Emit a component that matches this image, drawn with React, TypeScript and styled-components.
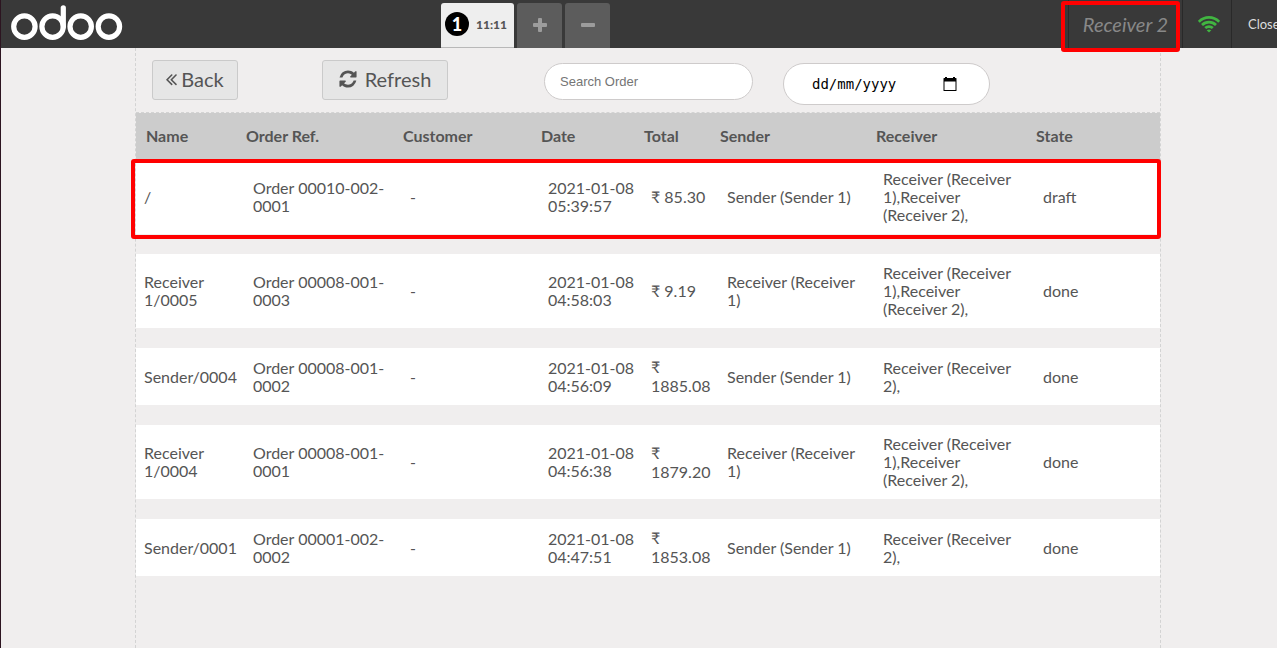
import React from "react";
import styled, { createGlobalStyle, css } from "styled-components";

const GlobalStyle = createGlobalStyle`
  *, *::before, *::after { box-sizing: border-box; }
  body {
    margin: 0;
    background: #f0eeee;
    color: #555555;
    font-family: Lato, "Liberation Sans", sans-serif;
    font-size: 16px;
    line-height: 18px;
  }
  button, input { margin: 0; font-family: inherit; color: inherit; }
`;

const Page = styled.div`
  display: flex;
  flex-direction: column;
  min-height: 100vh;
  border-left: 1px solid #2c1420;
  overflow: hidden;
`;

const TopBar = styled.header`
  display: flex;
  height: 48px;
  background: #393939;
`;

const Brand = styled.a`
  flex: none;
  width: 440px;
  padding: 4px 0 0 10px;
`;

const Tabs = styled.nav`
  display: flex;
  flex: 1;
  align-items: flex-end;
  gap: 3px;
`;

const OrderTab = styled.button`
  display: flex;
  align-items: center;
  gap: 7px;
  width: 73px;
  height: 45px;
  padding: 0 0 2px 4px;
  border: 0;
  border-bottom: 1px solid #b8b8b8;
  border-radius: 3px 3px 0 0;
  background: #eeeeee;
  font-size: 12px;
  font-weight: 900;
`;

const TabNumber = styled.span`
  width: 24px;
  border-radius: 12px;
  background: #000000;
  color: #ffffff;
  font-size: 18px;
  line-height: 24px;
  text-align: center;
`;

const SquareTab = styled.button`
  display: flex;
  align-items: center;
  justify-content: center;
  width: 45px;
  height: 45px;
  padding: 0 0 2px;
  border: 0;
  border-radius: 3px 3px 0 0;
  background: #5c5c5c;
`;

const marked = css`
  &::after {
    content: "";
    position: absolute;
    border: 4px solid #ff0000;
    border-radius: 3px;
    pointer-events: none;
  }
`;

const StatusItem = styled.div<{ $width: number }>`
  display: flex;
  flex: none;
  align-items: center;
  justify-content: center;
  width: ${(p) => p.$width}px;
  border-left: 1px solid #292929;
`;

const UserName = styled(StatusItem)`
  position: relative;
  color: #888888;
  font-size: 20px;
  font-style: italic;
  ${marked}
  &::after { inset: 1px 2px -4px -8px; }
`;

const Connection = styled(StatusItem)`
  padding-left: 4px;
`;

const CloseButton = styled.button`
  flex: none;
  width: 46px;
  padding: 0 0 0 16px;
  border: 0;
  border-left: 1px solid #292929;
  background: none;
  color: #dddddd;
  font-size: 13px;
  text-align: left;
  white-space: nowrap;
`;

const Main = styled.main`
  display: flex;
  flex: 1;
  flex-direction: column;
  margin: 0 116px 0 134px;
  border: dashed #d3d3d3;
  border-width: 0 1px;
`;

const Toolbar = styled.div`
  display: flex;
  align-items: flex-start;
  height: 65px;
  padding: 12px 16px 0;
  border-bottom: 1px dashed #d3d3d3;
`;

const ToolButton = styled.button<{ $width: number; $gap: number }>`
  display: flex;
  align-items: center;
  justify-content: center;
  gap: ${(p) => p.$gap}px;
  width: ${(p) => p.$width}px;
  height: 40px;
  padding: 0 0 2px;
  border: 1px solid #cacaca;
  border-radius: 3px;
  background: #e6e6e6;
  font-size: 20px;
`;

const Actions = styled.div`
  display: flex;
  gap: 84px;
  margin-right: 96px;
`;

const Filters = styled.div`
  display: flex;
  gap: 30px;
  padding-top: 3px;
`;

const SearchInput = styled.input`
  width: 209px;
  height: 37px;
  padding: 0 15px;
  border: 1px solid #cecbcb;
  border-radius: 20px;
  background: #ffffff;
  font-family: "Liberation Sans", Arial, sans-serif;
  font-size: 13px;
  &::placeholder { color: #757575; opacity: 1; }
`;

const DateField = styled.div`
  display: flex;
  align-items: center;
  justify-content: space-between;
  width: 207px;
  height: 42px;
  padding: 0 32px 0 28px;
  border: 1px solid #cecbcb;
  border-radius: 21px;
  background: #ffffff;
`;

const DateInput = styled.input`
  width: 100px;
  padding: 0;
  border: 0;
  background: none;
  font-family: "DejaVu Sans Mono", "Liberation Mono", monospace;
  font-size: 14px;
  &::placeholder { color: #000000; opacity: 1; }
`;

const IconButton = styled.button`
  display: flex;
  padding: 0;
  border: 0;
  background: none;
`;

const OrderTable = styled.table`
  width: 100%;
  table-layout: fixed;
  border-spacing: 0;
`;

const HeadCell = styled.th`
  height: 47px;
  padding: 0 1px 2px;
  background: #cccccc;
  text-align: left;
  &:first-child { padding-left: 10px; }
`;

const OrderRow = styled.tr<{ $marked: boolean }>`
  position: relative;
  ${(p) => p.$marked && marked}
  &::after { inset: -1px -1px 15px -5px; }
`;

const Cell = styled.td`
  padding: 10px 8px;
  border-bottom: 20px solid transparent;
  background: #ffffff;
  background-clip: padding-box;
`;

const TotalCell = styled(Cell)`
  padding: 9px 8px 10px;
  line-height: 19px;
`;

const columns = [
  { label: "Name", width: 109 },
  { label: "Order Ref.", width: 157 },
  { label: "Customer", width: 138 },
  { label: "Date", width: 103 },
  { label: "Total", width: 76 },
  { label: "Sender", width: 156 },
  { label: "Receiver", width: 160 },
  { label: "State", width: 125 },
];

const both = "Receiver (Receiver 1),Receiver (Receiver 2),";
const second = "Receiver (Receiver 2),";

const orders = [
  { name: "/", ref: "Order 00010-002-0001", date: "2021-01-08 05:39:57", total: "₹ 85.30", sender: "Sender (Sender 1)", receiver: both, state: "draft" },
  { name: "Receiver 1/0005", ref: "Order 00008-001-0003", date: "2021-01-08 04:58:03", total: "₹ 9.19", sender: "Receiver (Receiver 1)", receiver: both, state: "done" },
  { name: "Sender/0004", ref: "Order 00008-001-0002", date: "2021-01-08 04:56:09", total: "₹ 1885.08", sender: "Sender (Sender 1)", receiver: second, state: "done" },
  { name: "Receiver 1/0004", ref: "Order 00008-001-0001", date: "2021-01-08 04:56:38", total: "₹ 1879.20", sender: "Receiver (Receiver 1)", receiver: both, state: "done" },
  { name: "Sender/0001", ref: "Order 00001-002-0002", date: "2021-01-08 04:47:51", total: "₹ 1853.08", sender: "Sender (Sender 1)", receiver: second, state: "done" },
];

const Logo = () => (
  <svg width="113" height="40" viewBox="0 0 113 40" fill="none" stroke="#ffffff" strokeWidth="5.2" aria-hidden="true">
    <circle cx="13.4" cy="22.6" r="10.7" />
    <circle cx="41.6" cy="22.6" r="10.7" />
    <circle cx="69.7" cy="22.6" r="10.7" />
    <circle cx="97.9" cy="22.6" r="10.7" />
    <path d="M52.3 3.8V22.6" strokeLinecap="round" />
  </svg>
);

const WifiIcon = () => (
  <svg width="22" height="17" viewBox="0 0 22 17" fill="none" stroke="#41b541" strokeWidth="2.7" aria-hidden="true">
    <path d="M0.8 5.8Q5.2 1.4 11 1.4T21.2 5.8" />
    <path d="M4 9Q7 6.1 11 6.1T18 9" />
    <path d="M7.2 12.1Q8.9 10.6 11 10.6T14.8 12.1" />
    <path d="M11 16.6L8.7 14.3Q11 12.6 13.3 14.3Z" fill="#41b541" stroke="none" />
  </svg>
);

const AngleDoubleLeftIcon = () => (
  <svg width="11" height="20" viewBox="429 0 966 1792" fill="currentColor" aria-hidden="true">
    <path d="M1011 1376q0 13-10 23l-50 50q-10 10-23 10t-23-10l-466-466q-10-10-10-23t10-23l466-466q10-10 23-10t23 10l50 50q10 10 10 23t-10 23l-393 393 393 393q10 10 10 23zm384 0q0 13-10 23l-50 50q-10 10-23 10t-23-10l-466-466q-10-10-10-23t10-23l466-466q10-10 23-10t23 10l50 50q10 10 10 23t-10 23l-393 393 393 393q10 10 10 23z" />
  </svg>
);

const RefreshIcon = () => (
  <svg width="18" height="20" viewBox="0 0 1536 1792" fill="currentColor" aria-hidden="true">
    <path d="M1511 1056q0 5-1 7-64 268-268 434.5t-478 166.5q-146 0-282.5-55t-243.5-157l-129 129q-19 19-45 19t-45-19-19-45v-448q0-26 19-45t45-19h448q26 0 45 19t19 45-19 45l-137 137q71 66 161 102t187 36q134 0 250-65t186-179q11-17 53-117 8-23 30-23h192q13 0 22.5 9.5t9.5 22.5zm25-800v448q0 26-19 45t-45 19h-448q-26 0-45-19t-19-45 19-45l138-138q-148-137-349-137-134 0-250 65t-186 179q-11 17-53 117-8 23-30 23h-199q-13 0-22.5-9.5t-9.5-22.5v-7q65-268 270-434.5t480-166.5q146 0 284 55.5t245 156.5l130-129q19-19 45-19t45 19 19 45z" />
  </svg>
);

const PlusIcon = () => (
  <svg width="14" height="14" viewBox="0 0 14 14" fill="#9c9c9c" aria-hidden="true">
    <rect x="0" y="5" width="14" height="4" rx="1" />
    <rect x="5" y="0" width="4" height="14" rx="1" />
  </svg>
);

const MinusIcon = () => (
  <svg width="14" height="14" viewBox="0 0 14 14" fill="#9c9c9c" aria-hidden="true">
    <rect x="0" y="5" width="14" height="4" rx="1" />
  </svg>
);

const CalendarIcon = () => (
  <svg width="14" height="14" viewBox="0 0 14 14" aria-hidden="true">
    <path d="M2 0h2v1h6V0h2v1h1q.5 0 .5.500v12q0 .5-.5.500H1q-.5 0-.5-.500v-12Q.5 1 1 1h1zM1.500 4.500v8.500h11V4.500z" fill="#000000" fillRule="evenodd" />
  </svg>
);

export default function App() {
  return (
    <Page>
      <GlobalStyle />
      <TopBar>
        <Brand href="#" aria-label="odoo">
          <Logo />
        </Brand>
        <Tabs>
          <OrderTab type="button">
            <TabNumber>1</TabNumber>
            <span>11:11</span>
          </OrderTab>
          <SquareTab type="button" aria-label="New order">
            <PlusIcon />
          </SquareTab>
          <SquareTab type="button" aria-label="Remove order">
            <MinusIcon />
          </SquareTab>
        </Tabs>
        <UserName $width={114}>Receiver 2</UserName>
        <Connection $width={49}>
          <WifiIcon />
        </Connection>
        <CloseButton type="button">Close</CloseButton>
      </TopBar>
      <Main>
        <Toolbar>
          <Actions>
            <ToolButton type="button" $width={86} $gap={4}>
              <AngleDoubleLeftIcon />
              Back
            </ToolButton>
            <ToolButton type="button" $width={126} $gap={8}>
              <RefreshIcon />
              Refresh
            </ToolButton>
          </Actions>
          <Filters>
            <SearchInput type="text" placeholder="Search Order" aria-label="Search Order" />
            <DateField>
              <DateInput type="text" placeholder="dd/mm/yyyy" aria-label="Order date" />
              <IconButton type="button" aria-label="Open calendar">
                <CalendarIcon />
              </IconButton>
            </DateField>
          </Filters>
        </Toolbar>
        <OrderTable>
          <colgroup>
            {columns.map((c) => (
              <col key={c.label} width={c.width} />
            ))}
          </colgroup>
          <thead>
            <tr>
              {columns.map((c) => (
                <HeadCell key={c.label} scope="col">{c.label}</HeadCell>
              ))}
            </tr>
          </thead>
          <tbody>
            {orders.map((o) => (
              <OrderRow key={o.ref} $marked={o.state === "draft"}>
                <Cell>{o.name}</Cell>
                <Cell>{o.ref}</Cell>
                <Cell>-</Cell>
                <Cell>{o.date}</Cell>
                <TotalCell>{o.total}</TotalCell>
                <Cell>{o.sender}</Cell>
                <Cell>{o.receiver}</Cell>
                <Cell>{o.state}</Cell>
              </OrderRow>
            ))}
          </tbody>
        </OrderTable>
      </Main>
    </Page>
  );
}
